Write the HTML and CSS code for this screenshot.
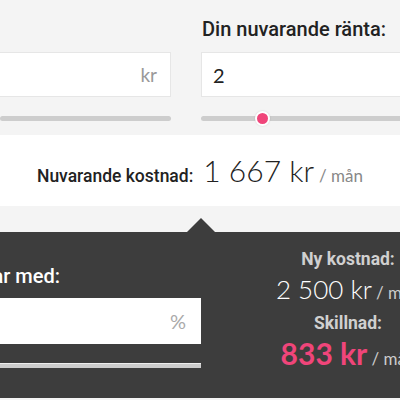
FILE: index.html
```html
<!DOCTYPE html>
<html lang="sv">
<head>
<meta charset="utf-8">
<link rel="stylesheet" href="styles.css">
</head>
<body>
<div class="page">
  <section class="top">
    <div class="cols">
      <div class="col">
        <div class="label">&nbsp;</div>
        <div class="field"><span class="unit">kr</span></div>
        <div class="track"></div>
      </div>
      <div class="col">
        <div class="label">Din nuvarande ränta:</div>
        <div class="field"><span class="val">2</span></div>
        <div class="track"><span class="thumb"></span></div>
      </div>
    </div>
  </section>
  <section class="summary">
    <span class="sum-label">Nuvarande kostnad:</span>
    <span class="big">1 667 kr</span>
    <span class="per">/ mån</span>
  </section>
  <div class="band"></div>
  <section class="dark">
    <div class="dark-cols">
      <div class="dcol">
        <div class="dlabel"><span>Om räntan ökar med:</span></div>
        <div class="field dfield"><span class="unit">%</span></div>
        <div class="dtrack"></div>
      </div>
      <div class="result">
        <div class="rlabel">Ny kostnad:</div>
        <div class="rvalue"><span class="num">2 500 kr</span> <span class="rper">/ mån</span></div>
        <div class="rlabel">Skillnad:</div>
        <div class="rvalue diff"><span class="num">833 kr</span> <span class="rper">/ mån</span></div>
      </div>
    </div>
  </section>
</div>
</body>
</html>
```
FILE: styles.css
```css
html, body {
  margin: 0;
  padding: 0;
  background: #f4f4f4;
  overflow: hidden;
}
body {
  font-family: Roboto, "Liberation Sans", sans-serif;
  color: #222;
}
.page {
  width: 400px;
  overflow: hidden;
}
.top {
  background: #f4f4f4;
  padding: 18px 0 14px;
}
.cols {
  display: grid;
  grid-template-columns: 171px 240px;
  column-gap: 30px;
}
.label {
  font-size: 20px;
  font-weight: 500;
  line-height: 22px;
  height: 22px;
  margin-bottom: 12px;
  white-space: nowrap;
  padding-left: 1px;
  color: #222;
}
.field {
  height: 45px;
  box-sizing: border-box;
  background: #fff;
  border: 1px solid #e6e6e6;
  display: flex;
  align-items: center;
  font-size: 20px;
}
.col:first-child .field {
  border-left: none;
  justify-content: flex-end;
  padding-right: 13px;
}
.unit {
  color: #999;
  font-size: 19px;
  font-family: Lato, sans-serif;
}
.val {
  padding-left: 11px;
  color: #222;
  font-family: Lato, sans-serif;
}
.track {
  position: relative;
  height: 5px;
  border-radius: 3px;
  background: #cdcdcd;
  margin-top: 19px;
}
.thumb {
  position: absolute;
  left: 54px;
  top: -5px;
  width: 11px;
  height: 11px;
  border-radius: 50%;
  background: #f0457a;
  border: 2px solid #fff;
  box-shadow: 0 0 2px rgba(0,0,0,0.15);
}
.summary {
  background: #fff;
  height: 71px;
  display: flex;
  align-items: baseline;
  justify-content: center;
  gap: 6px;
  padding-top: 17px;
  box-sizing: border-box;
}
.sum-label {
  font-size: 17.5px;
  font-weight: 500;
  margin-right: 4px;
}
.big {
  font-family: Lato, sans-serif;
  font-weight: 300;
  font-size: 30px;
  color: #222;
}
.per {
  font-family: Lato, sans-serif;
  font-size: 17px;
  color: #888;
  margin-left: -1px;
}
.band {
  height: 26px;
  background: #f4f4f4;
}
.dark {
  position: relative;
  background: #3d3d3d;
  height: 166px;
  color: #fff;
}
.dark::before {
  content: "";
  position: absolute;
  left: 187px;
  top: -14px;
  border-left: 14px solid transparent;
  border-right: 14px solid transparent;
  border-bottom: 14px solid #3d3d3d;
}
.dark-cols {
  display: grid;
  grid-template-columns: 201px 240px;
  column-gap: 27px;
}
.dcol {
  padding-top: 33px;
}
.dlabel {
  font-size: 20px;
  font-weight: 500;
  line-height: 22px;
  white-space: nowrap;
  width: 60px;
  display: flex;
  justify-content: flex-end;
  margin-bottom: 11px;
  color: #fff;
}
.dlabel span {
  flex: none;
}
.dfield {
  border: none;
  height: 46px;
  justify-content: flex-end;
  padding-right: 15px;
}
.dfield .unit {
  font-size: 20px;
  color: #aaa;
}
.dtrack {
  margin-top: 19px;
  height: 5px;
  background: #cdcdcd;
  border-top: 1px solid #eee;
  box-sizing: border-box;
}
.result {
  text-align: center;
  width: 240px;
  padding-top: 16px;
}
.rlabel {
  font-size: 17.5px;
  font-weight: 700;
  color: #d0d0d0;
  line-height: 22px;
}
.rvalue {
  font-family: Lato, sans-serif;
  white-space: nowrap;
  line-height: 38px;
}
.rvalue .num {
  font-size: 26px;
  font-weight: 300;
  color: #fff;
}
.rper {
  font-size: 17px;
  color: #ccc;
}
.diff .num {
  font-weight: 700;
  font-size: 30px;
  color: #f0457a;
}
```
